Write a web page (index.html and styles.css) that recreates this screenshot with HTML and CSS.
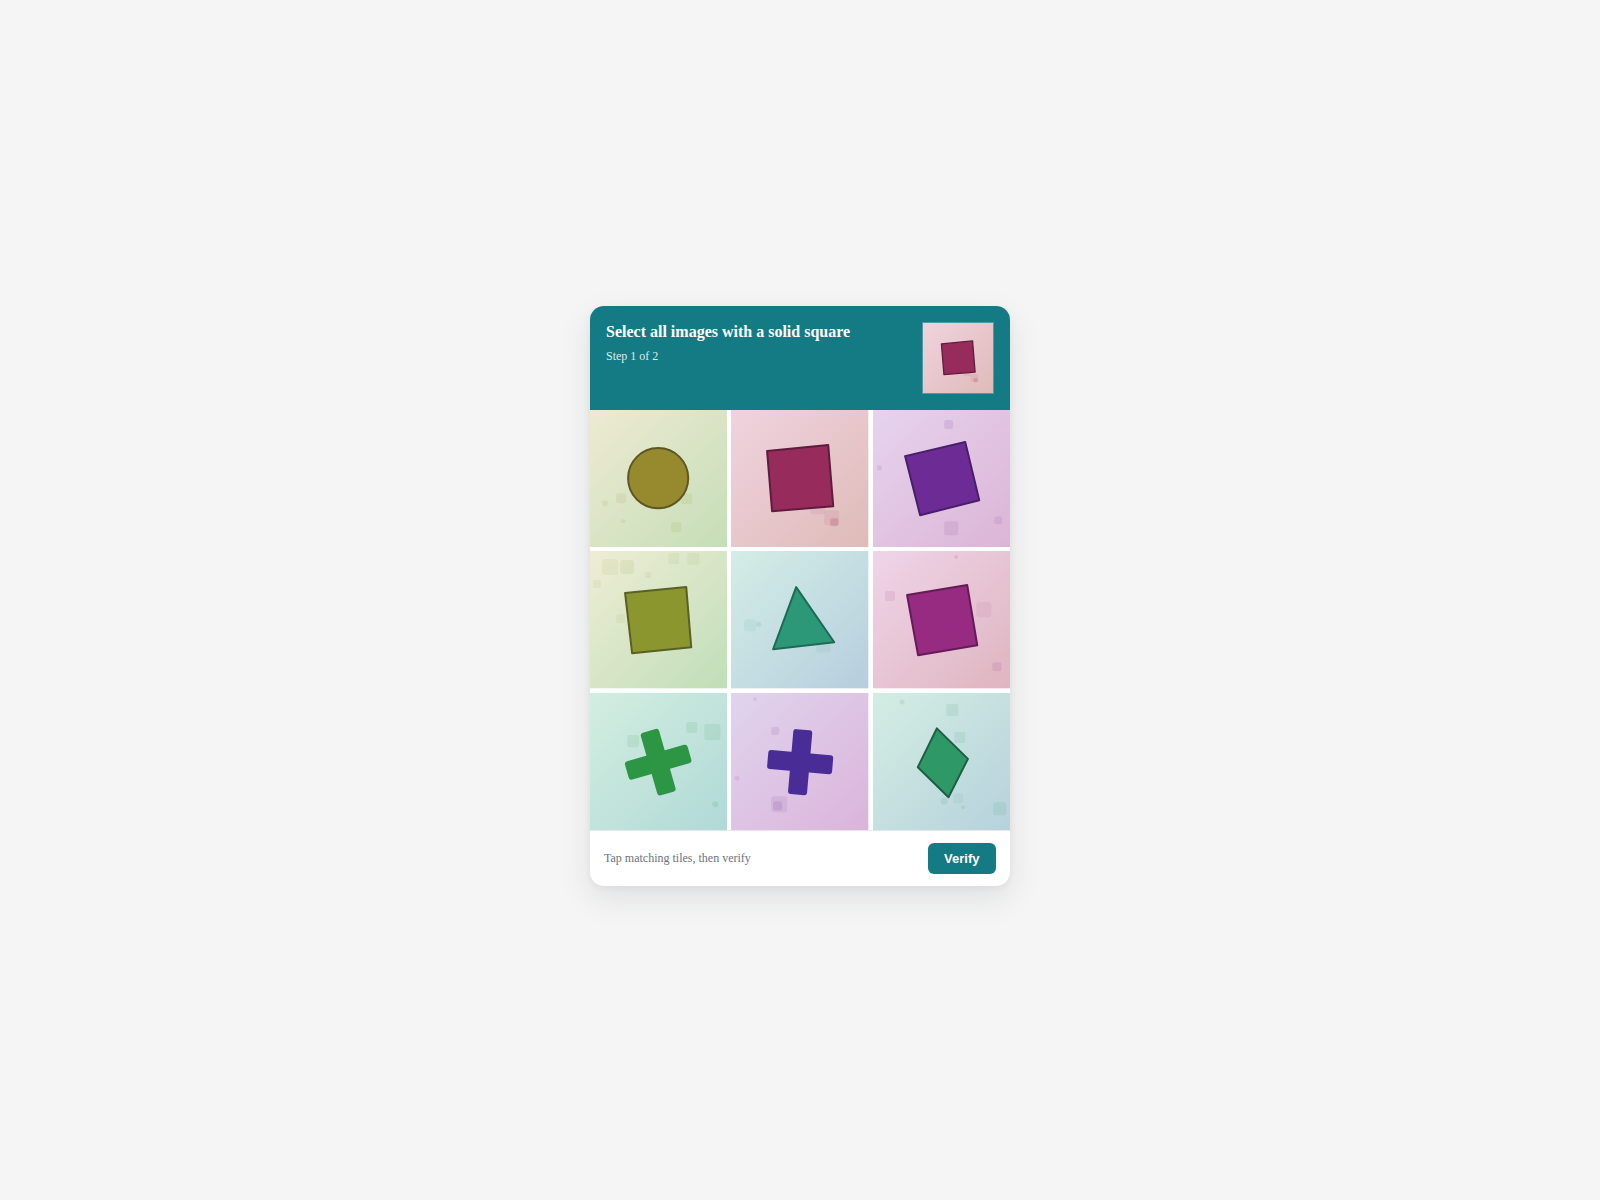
FILE: index.html
```html
<!DOCTYPE html>
<html lang="en">
<head>
<meta charset="utf-8">
<title>Captcha</title>
<link rel="stylesheet" href="styles.css">
</head>
<body>
<main class="page">
  <section class="card">
    <header class="card-header">
      <div class="header-text">
        <h1 class="title">Select all images with a solid square</h1>
        <p class="step">Step 1 of 2</p>
      </div>
      <div class="thumb">
        <svg class="tile-svg" viewBox="0 0 137 137">
          <defs><linearGradient id="gt" x1="0" y1="0" x2="1" y2="1"><stop offset="0" stop-color="#f0d3df"/><stop offset="1" stop-color="#dfbbb8"/></linearGradient></defs>
          <rect width="137" height="137" fill="url(#gt)"/>
          <rect x="79" y="93" width="15" height="11" rx="2" fill="#962b5c" opacity="0.08"/>
          <rect x="93" y="100" width="15" height="15" rx="3" fill="#962b5c" opacity="0.08"/>
          <rect x="99" y="108" width="8" height="8" rx="2" fill="#962b5c" opacity="0.2"/>
          <polygon points="36,41 97,35 102,96 41,101" fill="#962b5c" stroke="#5e1c3e" stroke-width="2.5" stroke-linejoin="round"/>
        </svg>
      </div>
    </header>

    <div class="grid">
      <!-- 1 circle -->
      <div class="tile">
        <svg class="tile-svg" viewBox="0 0 137 137">
          <defs><linearGradient id="g1" x1="0" y1="0" x2="1" y2="1"><stop offset="0" stop-color="#eeead3"/><stop offset="1" stop-color="#c5deb7"/></linearGradient></defs>
          <rect width="137" height="137" fill="url(#g1)"/>
          <rect x="26" y="83" width="10" height="10" rx="2" fill="#978a2e" opacity="0.1"/>
          <rect x="91" y="83" width="11" height="11" rx="2" fill="#978a2e" opacity="0.1"/>
          <rect x="81" y="112" width="10" height="10" rx="2" fill="#978a2e" opacity="0.1"/>
          <circle cx="15" cy="93" r="3" fill="#978a2e" opacity="0.1"/>
          <circle cx="33" cy="111" r="2" fill="#978a2e" opacity="0.12"/>
          <circle cx="68" cy="68" r="30" fill="#978a2e" stroke="#5e5722" stroke-width="2"/>
        </svg>
      </div>
      <!-- 2 crimson square -->
      <div class="tile">
        <svg class="tile-svg" viewBox="0 0 137 137">
          <defs><linearGradient id="g2" x1="0" y1="0" x2="1" y2="1"><stop offset="0" stop-color="#f0d3df"/><stop offset="1" stop-color="#dfbbb8"/></linearGradient></defs>
          <rect width="137" height="137" fill="url(#g2)"/>
          <rect x="79" y="93" width="15" height="11" rx="2" fill="#962b5c" opacity="0.08"/>
          <rect x="93" y="100" width="15" height="15" rx="3" fill="#962b5c" opacity="0.08"/>
          <rect x="99" y="108" width="8" height="8" rx="2" fill="#962b5c" opacity="0.2"/>
          <polygon points="36,41 97,35 102,96 41,101" fill="#962b5c" stroke="#5e1c3e" stroke-width="2" stroke-linejoin="round"/>
        </svg>
      </div>
      <!-- 3 purple square -->
      <div class="tile">
        <svg class="tile-svg" viewBox="0 0 137 137">
          <defs><linearGradient id="g3" x1="0" y1="0" x2="1" y2="1"><stop offset="0" stop-color="#e6d3ed"/><stop offset="1" stop-color="#dcb5d6"/></linearGradient></defs>
          <rect width="137" height="137" fill="url(#g3)"/>
          <rect x="71" y="10" width="9" height="9" rx="2" fill="#6d2b95" opacity="0.12"/>
          <rect x="4" y="55" width="5" height="5" rx="1.5" fill="#6d2b95" opacity="0.1"/>
          <rect x="71" y="111" width="14" height="14" rx="2" fill="#6d2b95" opacity="0.1"/>
          <rect x="121" y="106" width="8" height="8" rx="2.5" fill="#6d2b95" opacity="0.1"/>
          <polygon points="32,46 92,32 106,90 47,105" fill="#6d2b95" stroke="#4a1f6a" stroke-width="2" stroke-linejoin="round"/>
        </svg>
      </div>
      <!-- 4 olive square -->
      <div class="tile">
        <svg class="tile-svg" viewBox="0 0 137 137">
          <defs><linearGradient id="g4" x1="0" y1="0" x2="1" y2="1"><stop offset="0" stop-color="#eeedd5"/><stop offset="1" stop-color="#c0deb8"/></linearGradient></defs>
          <rect width="137" height="137" fill="url(#g4)"/>
          <rect x="12" y="8" width="16" height="16" rx="3" fill="#8c962e" opacity="0.08"/>
          <rect x="30" y="9" width="14" height="14" rx="3" fill="#8c962e" opacity="0.1"/>
          <rect x="78" y="2" width="11" height="11" rx="2" fill="#8c962e" opacity="0.08"/>
          <rect x="97" y="2" width="12" height="12" rx="2" fill="#8c962e" opacity="0.08"/>
          <rect x="55" y="21" width="6" height="6" rx="1.5" fill="#8c962e" opacity="0.1"/>
          <rect x="3" y="29" width="8" height="8" rx="2" fill="#8c962e" opacity="0.08"/>
          <rect x="26" y="63" width="9" height="9" rx="2" fill="#8c962e" opacity="0.08"/>
          <polygon points="35,42 96,36 101,96 42,102" fill="#8c962e" stroke="#5a5f22" stroke-width="2" stroke-linejoin="round"/>
        </svg>
      </div>
      <!-- 5 triangle -->
      <div class="tile">
        <svg class="tile-svg" viewBox="0 0 137 137">
          <defs><linearGradient id="g5" x1="0" y1="0" x2="1" y2="1"><stop offset="0" stop-color="#d4ede6"/><stop offset="1" stop-color="#b6cede"/></linearGradient></defs>
          <rect width="137" height="137" fill="url(#g5)"/>
          <rect x="13" y="68" width="12" height="12" rx="2.5" fill="#2d9878" opacity="0.07"/>
          <circle cx="27.5" cy="73" r="2.5" fill="#2d9878" opacity="0.12"/>
          <rect x="85" y="88" width="14" height="13" rx="2" fill="#2d9878" opacity="0.08"/>
          <polygon points="65,36 103,91 42,98" fill="#2d9878" stroke="#1d6b54" stroke-width="2" stroke-linejoin="round"/>
        </svg>
      </div>
      <!-- 6 magenta square -->
      <div class="tile">
        <svg class="tile-svg" viewBox="0 0 137 137">
          <defs><linearGradient id="g6" x1="0" y1="0" x2="1" y2="1"><stop offset="0" stop-color="#efd4e8"/><stop offset="1" stop-color="#dfb5c0"/></linearGradient></defs>
          <rect width="137" height="137" fill="url(#g6)"/>
          <rect x="12" y="40" width="10" height="10" rx="2" fill="#972b82" opacity="0.1"/>
          <rect x="103" y="51" width="15" height="15" rx="3" fill="#972b82" opacity="0.07"/>
          <rect x="119" y="111" width="9" height="9" rx="2" fill="#972b82" opacity="0.12"/>
          <circle cx="83" cy="6" r="2" fill="#972b82" opacity="0.12"/>
          <polygon points="34,44 94,34 104,94 45,104" fill="#972b82" stroke="#631c58" stroke-width="2" stroke-linejoin="round"/>
        </svg>
      </div>
      <!-- 7 green cross -->
      <div class="tile">
        <svg class="tile-svg" viewBox="0 0 137 137">
          <defs><linearGradient id="g7" x1="0" y1="0" x2="1" y2="1"><stop offset="0" stop-color="#d3eee0"/><stop offset="1" stop-color="#b0d9d7"/></linearGradient></defs>
          <rect width="137" height="137" fill="url(#g7)"/>
          <rect x="37" y="42" width="12" height="12" rx="2" fill="#2d9644" opacity="0.1"/>
          <rect x="96" y="29" width="11" height="11" rx="2" fill="#2d9644" opacity="0.1"/>
          <rect x="114" y="31" width="16" height="16" rx="2.5" fill="#2d9644" opacity="0.1"/>
          <circle cx="125" cy="111" r="3" fill="#2d9644" opacity="0.12"/>
          <g transform="rotate(-16 68 69)" fill="#2d9644">
            <rect x="35.5" y="59.5" width="65" height="19" rx="3"/>
            <rect x="58.5" y="36.5" width="19" height="65" rx="3"/>
          </g>
        </svg>
      </div>
      <!-- 8 purple cross -->
      <div class="tile">
        <svg class="tile-svg" viewBox="0 0 137 137">
          <defs><linearGradient id="g8" x1="0" y1="0" x2="1" y2="1"><stop offset="0" stop-color="#e0d4ee"/><stop offset="1" stop-color="#dbb4db"/></linearGradient></defs>
          <rect width="137" height="137" fill="url(#g8)"/>
          <rect x="40" y="34" width="8" height="8" rx="2" fill="#7a3a9a" opacity="0.12"/>
          <rect x="40" y="103" width="16" height="16" rx="3" fill="#7a3a9a" opacity="0.1"/>
          <rect x="42" y="108" width="9" height="9" rx="2.5" fill="#7a3a9a" opacity="0.15"/>
          <circle cx="6" cy="85" r="2.5" fill="#a03a9a" opacity="0.12"/>
          <circle cx="24" cy="6" r="2" fill="#a03a9a" opacity="0.1"/>
          <g transform="rotate(5 69 69)" fill="#4a2c96">
            <rect x="36.5" y="59.5" width="65" height="19" rx="3"/>
            <rect x="59.5" y="36.5" width="19" height="65" rx="3"/>
          </g>
        </svg>
      </div>
      <!-- 9 diamond -->
      <div class="tile">
        <svg class="tile-svg" viewBox="0 0 137 137">
          <defs><linearGradient id="g9" x1="0" y1="0" x2="1" y2="1"><stop offset="0" stop-color="#d4ede3"/><stop offset="1" stop-color="#b6d2dc"/></linearGradient></defs>
          <rect width="137" height="137" fill="url(#g9)"/>
          <rect x="73" y="11" width="12" height="12" rx="2" fill="#2e9866" opacity="0.1"/>
          <rect x="81" y="39" width="11" height="11" rx="2" fill="#2e9866" opacity="0.1"/>
          <rect x="120" y="109" width="13" height="13" rx="2.5" fill="#2e9866" opacity="0.1"/>
          <rect x="80" y="100" width="10" height="10" rx="2" fill="#2e9866" opacity="0.07"/>
          <circle cx="29" cy="9" r="2.5" fill="#2e9866" opacity="0.12"/>
          <circle cx="71" cy="108" r="3.5" fill="#2e9866" opacity="0.12"/>
          <circle cx="90" cy="114" r="2" fill="#2e9866" opacity="0.12"/>
          <polygon points="63.7,35.3 94.7,65.7 75.3,104 44.7,74" fill="#2e9866" stroke="#1e5f42" stroke-width="2" stroke-linejoin="round"/>
        </svg>
      </div>
    </div>

    <footer class="card-footer">
      <span class="hint">Tap matching tiles, then verify</span>
      <button class="verify" type="button">Verify</button>
    </footer>
  </section>
</main>
</body>
</html>
```

FILE: styles.css
```css
* { box-sizing: border-box; }

html, body {
  margin: 0;
  padding: 0;
  background: #f5f5f5;
}

body {
  font-family: "Liberation Serif", "Times New Roman", serif;
}

.page {
  min-height: 1200px;
  display: flex;
  align-items: center;
  justify-content: center;
  padding-bottom: 8px;
}

.card {
  width: 420px;
  background: #ffffff;
  border-radius: 14px;
  overflow: hidden;
  box-shadow: 0 12px 32px rgba(30, 40, 60, 0.10), 0 2px 6px rgba(30, 40, 60, 0.05);
}

.card-header {
  background: #147a84;
  color: #ffffff;
  padding: 16px;
  display: flex;
  justify-content: space-between;
  align-items: flex-start;
}

.title {
  margin: 0;
  font-size: 16px;
  font-weight: 700;
  line-height: 20px;
}

.step {
  margin: 7px 0 0;
  font-size: 12px;
  line-height: 14px;
  color: rgba(255, 255, 255, 0.88);
}

.thumb {
  width: 72px;
  height: 72px;
  flex: none;
  border: 1px solid rgba(255, 255, 255, 0.25);
}

.tile-svg {
  display: block;
  width: 100%;
  height: 100%;
}

.grid {
  display: grid;
  grid-template-columns: repeat(3, 1fr);
  gap: 4px;
  background: #ffffff;
}

.tile {
  aspect-ratio: 1 / 1;
}

.card-footer {
  height: 56px;
  border-top: 1px solid #e6e8ee;
  display: flex;
  align-items: center;
  justify-content: space-between;
  padding: 0 14px;
}

.hint {
  font-size: 12px;
  color: #6b7280;
}

.verify {
  font-family: "Liberation Sans", Arial, sans-serif;
  font-weight: 700;
  font-size: 13px;
  color: #ffffff;
  background: #147a84;
  border: none;
  border-radius: 6px;
  height: 31px;
  padding: 0 16.5px;
  cursor: pointer;
}
```
